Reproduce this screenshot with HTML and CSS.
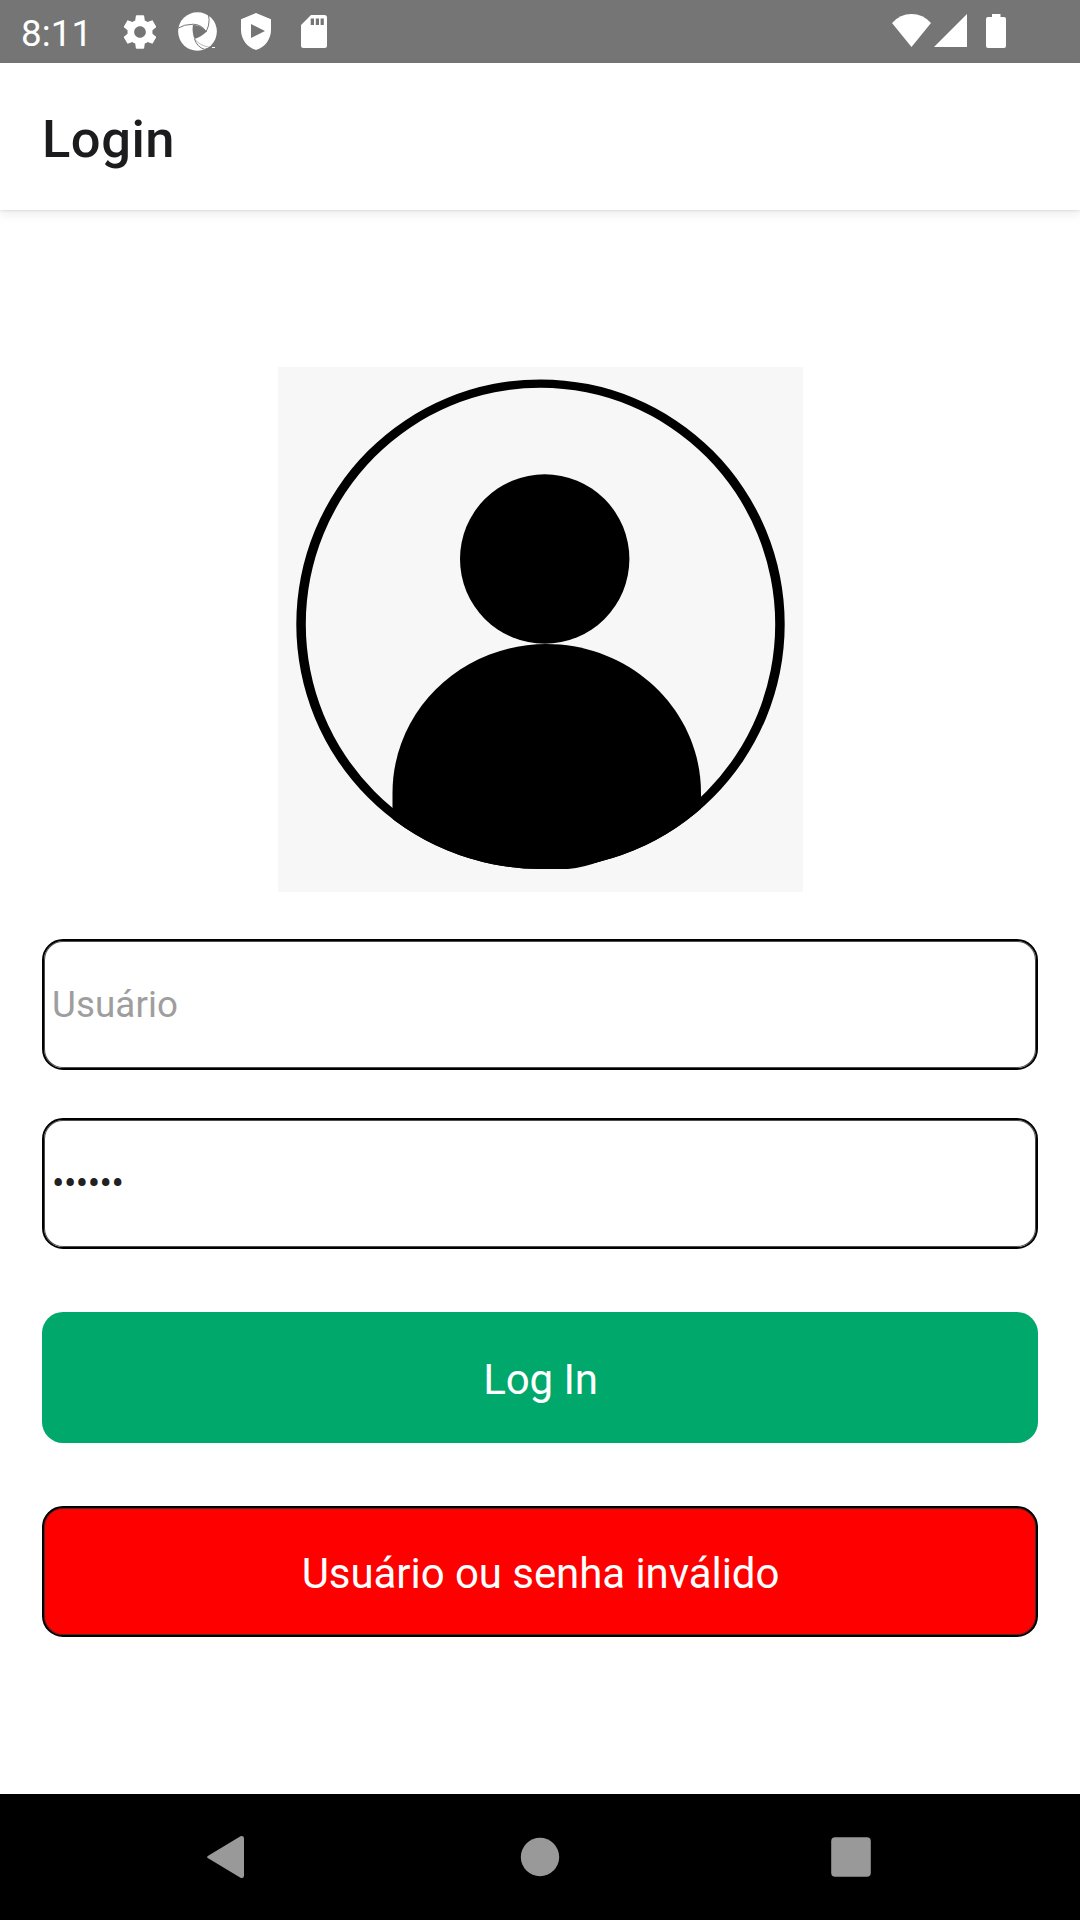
FILE: index.html
```html
<!DOCTYPE html>
<html lang="pt-BR">
<head>
<meta charset="utf-8">
<title>Login</title>
<link rel="stylesheet" href="styles.css">
</head>
<body>
<div class="screen">
  <div class="status-bar">
    <span class="clock">8:11</span>
    <div class="notifications">
      <svg class="gear" viewBox="0 0 24 24"><path d="M19.43 12.98c.04-.32.07-.64.07-.98s-.03-.66-.07-.98l2.11-1.65c.19-.15.24-.42.12-.64l-2-3.46c-.12-.22-.39-.3-.61-.22l-2.49 1c-.52-.4-1.08-.73-1.69-.98l-.38-2.65C14.46 2.18 14.25 2 14 2h-4c-.25 0-.46.18-.49.42l-.38 2.65c-.61.25-1.17.59-1.69.98l-2.49-1c-.23-.09-.49 0-.61.22l-2 3.46c-.13.22-.07.49.12.64l2.11 1.65c-.04.32-.07.65-.07.98s.03.66.07.98l-2.11 1.65c-.19.15-.24.42-.12.64l2 3.46c.12.22.39.3.61.22l2.49-1c.52.4 1.08.73 1.69.98l.38 2.65c.03.24.24.42.49.42h4c.25 0 .46-.18.49-.42l.38-2.65c.61-.25 1.17-.59 1.69-.98l2.49 1c.23.09.49 0 .61-.22l2-3.46c.12-.22.07-.49-.12-.64l-2.11-1.65zM12 15.500c-1.930 0-3.500-1.570-3.500-3.500s1.570-3.500 3.500-3.500 3.500 1.570 3.500 3.500-1.570 3.500-3.500 3.500z"/></svg>
      <svg class="aperture" viewBox="0 0 118 118">
        <circle cx="59" cy="59" r="58.500"/>
        <path class="cut" d="M45 39Q71 38 86 60Q70 76 50 82Q42 62 45 39Z"/>
        <path class="seam" d="M0 49Q18 37 46 37Q72 38 86 60M91 3Q97 24 92 42Q88 54 84 61M50 82Q58 106 80 113L98 108"/>
        <path class="thin" d="M51 82Q65 102 97 107"/>
        <path d="M103 106h9v3h-9z"/>
      </svg>
      <svg class="shield" viewBox="0 0 30 37"><path fill-rule="evenodd" d="M15 0 30 6.300V17C30 26 24 34.500 15 37 6 34.500 0 26 0 17V6.300ZM10 11V25L24 18Z"/></svg>
      <svg class="sd" viewBox="0 0 26 33"><path fill-rule="evenodd" d="M10 0H23.500Q26 0 26 2.500V30.500Q26 33 23.500 33H2.500Q0 33 0 30.500V10ZM9.700 3.500V10H13V3.500ZM14.800 3.500V10H18V3.500ZM19.600 3.500V10H22.800V3.500Z"/></svg>
    </div>
    <div class="system">
      <svg class="wifi" viewBox="0 0 39 33"><path d="M0 9Q8 0 19.500 0T39 9L19.500 33Z"/></svg>
      <svg class="signal" viewBox="0 0 33 33"><path d="M33 0V33H0Z"/></svg>
      <svg class="battery" viewBox="0 0 20 34"><path d="M6 0H14.500V3H18Q20 3 20 5V32Q20 34 18 34H2Q0 34 0 32V5Q0 3 2 3H6Z"/></svg>
    </div>
  </div>
  <header class="app-bar"><h1>Login</h1></header>
  <main class="content">
    <svg class="avatar" viewBox="0 0 525 525">
      <defs><clipPath id="disc"><ellipse cx="262.500" cy="257.200" rx="244.200" ry="244.800"/></clipPath></defs>
      <path fill-rule="evenodd" d="M18.300 257.200a244.200 244.800 0 1 1 488.400 0a244.200 244.800 0 1 1 -488.400 0ZM27.800 257.200a234.700 236.400 0 1 0 469.400 0a234.700 236.400 0 1 0 -469.400 0Z"/>
      <circle cx="266.700" cy="192" r="84.700"/>
      <path clip-path="url(#disc)" d="M114.500 525V426C114.500 343 184 277 268.500 277S423 343 423 426V525Z"/>
      <path d="M262 502H290Q306 500.500 323 494L262 480Z"/>
    </svg>
    <form class="login-form">
      <input class="field" type="text" placeholder="Usuário">
      <input class="field password" type="password" value="123456">
      <button class="submit" type="button">Log In</button>
      <div class="error">Usuário ou senha inválido</div>
    </form>
  </main>
  <nav class="nav-bar">
    <svg viewBox="0 0 42 42"><path d="M3 19.200 34.500.3Q38 -1 38 2.500V39.500Q38 43 34.500 41.700L3 22.800Q-.8 21 3 19.200Z"/></svg>
    <svg viewBox="0 0 42 42"><circle cx="22" cy="21" r="19.200"/></svg>
    <svg viewBox="0 0 42 42"><rect x="1.200" y="1.200" width="39.600" height="39.600" rx="4"/></svg>
  </nav>
</div>
</body>
</html>
```
FILE: styles.css
```css
* { box-sizing: border-box; }
body { margin: 0; font-family: Roboto, sans-serif; background: #fff; }
svg { display: block; }

.screen { width: 1080px; height: 1920px; display: flex; flex-direction: column; overflow: hidden; }

.status-bar { height: 63px; background: #757575; color: #fff; display: flex; align-items: flex-start; padding: 0 74px 0 21px; fill: #fff; }
.clock { width: 103px; font-size: 36.75px; line-height: 43px; padding-top: 12px; letter-spacing: .1px; }
.notifications { display: flex; align-items: center; height: 63px; margin-left: -4px; }
.gear { width: 40px; height: 40px; }
.aperture { width: 39px; height: 39px; margin-left: 18px; }
.cut { fill: #757575; }
.seam { fill: none; stroke: #757575; stroke-width: 3; }
.thin { fill: none; stroke: #757575; stroke-width: 1.5; }
.shield { width: 30px; height: 37px; margin-left: 24px; }
.sd { width: 26px; height: 33px; margin-left: 30px; }
.system { display: flex; align-items: flex-start; margin-left: auto; padding-top: 14px; }
.wifi { width: 39px; height: 33px; }
.signal { width: 33px; height: 33px; margin-left: 3px; }
.battery { width: 20px; height: 34px; margin-left: 19px; }

.app-bar { height: 147px; padding: 4px 42px 0; display: flex; align-items: center; box-shadow: 0 1px 2px rgba(0, 0, 0, .08), 0 4px 10px rgba(0, 0, 0, .08); }
.app-bar h1 { margin: 0; font-size: 52.5px; font-weight: 500; letter-spacing: .5px; color: #1c1c1e; }

.content { flex: 1; display: flex; flex-direction: column; align-items: center; padding: 157px 42px 0; }
.avatar { width: 525px; height: 525px; background: #f7f7f7; margin-left: 1px; }

.login-form { width: 100%; display: flex; flex-direction: column; margin-top: 47px; }
.field, .submit, .error { width: 100%; height: 131px; border-radius: 21px; font-family: inherit; }
.field { border: 2px solid #000; box-shadow: inset 0 0 0 1px rgba(0, 0, 0, .7); padding: 0 8px; font-size: 36.75px; color: #212121; background: #fff; outline: 0; margin-bottom: 48px; }
.field::placeholder { color: #9e9e9e; opacity: 1; letter-spacing: .1px; }
.password { letter-spacing: -.5px; }
.submit { border: 0; background: #00a86b; color: #fff; font-size: 42px; letter-spacing: -.1px; margin-top: 15px; padding: 4px 0 0 1px; }
.error { margin-top: 63px; border: 2px solid #000; box-shadow: inset 0 0 0 1px #522; background: #f00; color: #fff; font-size: 42px; letter-spacing: -.06px; display: flex; align-items: center; justify-content: center; padding: 4px 0 0 1px; }

.nav-bar { height: 126px; background: #000; fill: #999; display: flex; align-items: center; justify-content: space-between; padding: 0 208px 0 206px; }
.nav-bar svg { width: 42px; height: 42px; overflow: visible; }
```
